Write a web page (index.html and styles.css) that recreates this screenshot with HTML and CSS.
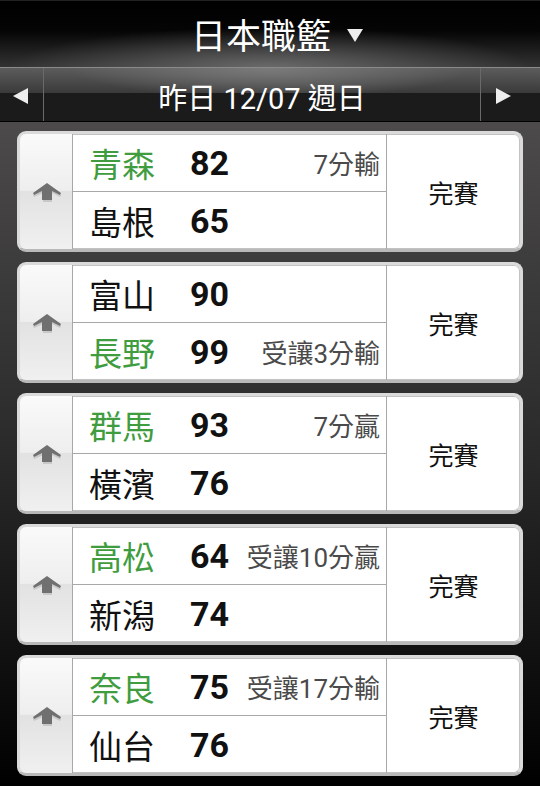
FILE: index.html
```html
<!DOCTYPE html>
<html>
<head>
  <meta charset="utf-8">
  <title>日本職籃</title>
  <link rel="stylesheet" href="styles.css">
</head>
<body>
  <header class="title-bar">
    <h1>日本職籃</h1>
    <span class="title-arrow"></span>
  </header>
  <nav class="date-bar">
    <div class="date-btn prev"><span class="tri-left"></span></div>
    <div class="date-text">昨日 12/07 週日</div>
    <div class="date-btn next"><span class="tri-right"></span></div>
  </nav>
  <main class="game-list">
    <div class="game">
      <div class="game-arrow"><svg width="30" height="19" viewBox="0 0 30 19"><path d="M15 2 L29 12 L28 14 L20 10 L20 19 L11 19 L11 10 L2 14 L1 12 Z" fill="#c8c8c8"/><path d="M15 0 L29 10 L28 12 L20 8 L20 17 L10 17 L10 8 L2 12 L1 10 Z" fill="#707070"/></svg></div>
      <div class="game-teams">
        <div class="team-row">
          <span class="team-name win">青森</span>
          <span class="team-score">82</span>
          <span class="team-note">7分輸</span>
        </div>
        <div class="team-row">
          <span class="team-name">島根</span>
          <span class="team-score">65</span>
          <span class="team-note"></span>
        </div>
      </div>
      <div class="game-status">完賽</div>
    </div>
    <div class="game">
      <div class="game-arrow"><svg width="30" height="19" viewBox="0 0 30 19"><path d="M15 2 L29 12 L28 14 L20 10 L20 19 L11 19 L11 10 L2 14 L1 12 Z" fill="#c8c8c8"/><path d="M15 0 L29 10 L28 12 L20 8 L20 17 L10 17 L10 8 L2 12 L1 10 Z" fill="#707070"/></svg></div>
      <div class="game-teams">
        <div class="team-row">
          <span class="team-name">富山</span>
          <span class="team-score">90</span>
          <span class="team-note"></span>
        </div>
        <div class="team-row">
          <span class="team-name win">長野</span>
          <span class="team-score">99</span>
          <span class="team-note">受讓3分輸</span>
        </div>
      </div>
      <div class="game-status">完賽</div>
    </div>
    <div class="game">
      <div class="game-arrow"><svg width="30" height="19" viewBox="0 0 30 19"><path d="M15 2 L29 12 L28 14 L20 10 L20 19 L11 19 L11 10 L2 14 L1 12 Z" fill="#c8c8c8"/><path d="M15 0 L29 10 L28 12 L20 8 L20 17 L10 17 L10 8 L2 12 L1 10 Z" fill="#707070"/></svg></div>
      <div class="game-teams">
        <div class="team-row">
          <span class="team-name win">群馬</span>
          <span class="team-score">93</span>
          <span class="team-note">7分贏</span>
        </div>
        <div class="team-row">
          <span class="team-name">橫濱</span>
          <span class="team-score">76</span>
          <span class="team-note"></span>
        </div>
      </div>
      <div class="game-status">完賽</div>
    </div>
    <div class="game">
      <div class="game-arrow"><svg width="30" height="19" viewBox="0 0 30 19"><path d="M15 2 L29 12 L28 14 L20 10 L20 19 L11 19 L11 10 L2 14 L1 12 Z" fill="#c8c8c8"/><path d="M15 0 L29 10 L28 12 L20 8 L20 17 L10 17 L10 8 L2 12 L1 10 Z" fill="#707070"/></svg></div>
      <div class="game-teams">
        <div class="team-row">
          <span class="team-name win">高松</span>
          <span class="team-score">64</span>
          <span class="team-note">受讓10分贏</span>
        </div>
        <div class="team-row">
          <span class="team-name">新潟</span>
          <span class="team-score">74</span>
          <span class="team-note"></span>
        </div>
      </div>
      <div class="game-status">完賽</div>
    </div>
    <div class="game">
      <div class="game-arrow"><svg width="30" height="19" viewBox="0 0 30 19"><path d="M15 2 L29 12 L28 14 L20 10 L20 19 L11 19 L11 10 L2 14 L1 12 Z" fill="#c8c8c8"/><path d="M15 0 L29 10 L28 12 L20 8 L20 17 L10 17 L10 8 L2 12 L1 10 Z" fill="#707070"/></svg></div>
      <div class="game-teams">
        <div class="team-row">
          <span class="team-name win">奈良</span>
          <span class="team-score">75</span>
          <span class="team-note">受讓17分輸</span>
        </div>
        <div class="team-row">
          <span class="team-name">仙台</span>
          <span class="team-score">76</span>
          <span class="team-note"></span>
        </div>
      </div>
      <div class="game-status">完賽</div>
    </div>
  </main>
</body>
</html>
```

FILE: styles.css
```css
* {
  box-sizing: border-box;
  margin: 0;
  padding: 0;
}
html, body {
  height: 100%;
}
body {
  font-family: Roboto, "Noto Sans CJK TC", sans-serif;
  background: #000;
  width: 540px;
  height: 786px;
  overflow: hidden;
}
.title-bar {
  height: 67px;
  display: flex;
  align-items: center;
  justify-content: center;
  gap: 16px;
  color: #fff;
  background:
    radial-gradient(ellipse 260px 40px at 50% 100%, rgba(150,150,150,0.55), rgba(80,80,80,0) 100%),
    linear-gradient(#000 0%, #050505 45%, #333 100%);
  border-top: 1px solid #222;
}
.title-bar h1 {
  font-family: "Noto Sans CJK TC", sans-serif;
  font-size: 35px;
  font-weight: normal;
  line-height: 1;
  margin-top: -1px;
  margin-left: 14px;
}
.title-arrow {
  width: 0;
  height: 0;
  border-left: 8px solid transparent;
  border-right: 8px solid transparent;
  border-top: 13px solid #eee;
  margin-top: 2px;
}
.date-bar {
  height: 55px;
  display: flex;
  border-top: 1px solid #8a8a8a;
  border-bottom: 1px solid #000;
  background:
    linear-gradient(rgba(0,0,0,0) 0, rgba(0,0,0,0) 25px, #1b1b1b 25px, #1b1b1b 100%),
    radial-gradient(ellipse 200px 30px at 50% 0%, #7a7a7a, rgba(90,90,90,0) 100%),
    linear-gradient(#5c5c5c, #3a3a3a 25px);
}
.date-btn {
  width: 44px;
  display: flex;
  align-items: center;
}
.date-btn.prev {
  justify-content: center;
  border-right: 1px solid #6a6a6a;
}
.date-btn.next {
  width: 60px;
  padding-left: 15px;
  border-left: 1px solid #6a6a6a;
}
.tri-left, .tri-right {
  width: 0;
  height: 0;
  border-top: 8px solid transparent;
  border-bottom: 8px solid transparent;
  margin-top: 2px;
}
.tri-left {
  border-right: 15px solid #eee;
  margin-right: 2px;
}
.tri-right {
  border-left: 15px solid #eee;
}
.date-text {
  flex: 1;
  display: flex;
  align-items: center;
  justify-content: center;
  color: #fff;
  font-size: 29px;
  padding-top: 2px;
}
.game-list {
  height: 664px;
  padding: 9px 17px 0;
  display: flex;
  flex-direction: column;
  gap: 10px;
  background: linear-gradient(#4c4a4a 0%, #2a2a2a 50%, #000 100%);
}
.game {
  height: 121px;
  flex-shrink: 0;
  display: grid;
  grid-template-columns: 53px 314px 1fr;
  background: #fff;
  border: 3px solid #dadada;
  border-bottom-color: #b9b9b9;
  border-radius: 9px;
  box-shadow: inset 0 0 0 1px #c2c2c2;
  overflow: hidden;
}
.game-arrow {
  display: flex;
  align-items: center;
  justify-content: center;
  border-right: 1px solid #a8a8a8;
  padding-left: 1px;
  padding-top: 2px;
  background: linear-gradient(#fafafa 0%, #eeeeee 49%, #e2e2e2 50%, #f0f0f0 100%);
}
.game-teams {
  display: flex;
  flex-direction: column;
  border-right: 1px solid #a8a8a8;
}
.team-row {
  flex: 1;
  display: flex;
  align-items: center;
  padding: 0 6px 0 16px;
}
.team-row + .team-row {
  border-top: 1px solid #a8a8a8;
}
.team-name {
  width: 101px;
  font-family: "Noto Sans CJK TC", sans-serif;
  font-size: 33px;
  color: #111;
}
.team-name.win {
  color: #3f9c3f;
}
.team-score {
  font-size: 34px;
  font-weight: bold;
  color: #111;
}
.team-note {
  flex: 1;
  text-align: right;
  font-size: 26px;
  color: #4a4a4a;
  white-space: nowrap;
}
.game-status {
  display: flex;
  align-items: center;
  justify-content: center;
  font-family: "Noto Sans CJK TC", sans-serif;
  font-size: 25px;
  color: #111;
}
```
